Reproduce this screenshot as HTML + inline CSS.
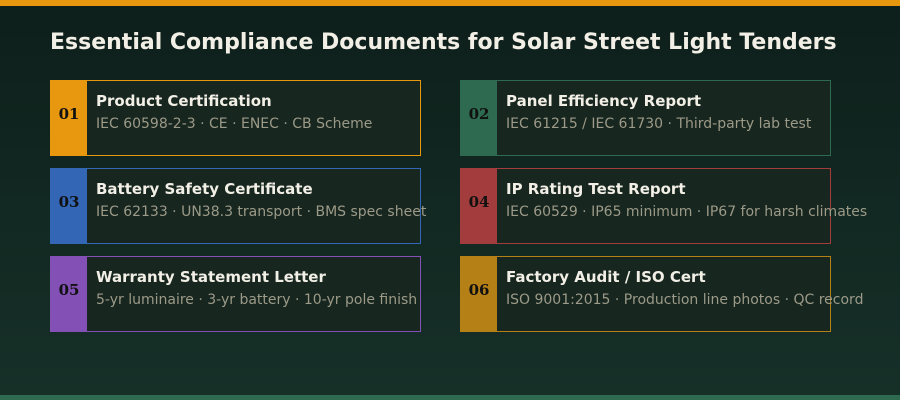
<!DOCTYPE html>
<html><head><style>html,body{margin:0;padding:0;background:#11221d}svg{display:block}</style></head>
<body>
<svg width="900" height="400" xmlns="http://www.w3.org/2000/svg" font-family="DejaVu Sans, sans-serif">
<defs><linearGradient id="g" x1="0" y1="0" x2="0" y2="1"><stop offset="0" stop-color="#0e1f1b"/><stop offset="1" stop-color="#163028"/></linearGradient></defs>
<rect width="900" height="400" fill="url(#g)"/>
<rect width="900" height="6" fill="#e8980e"/>
<rect y="395" width="900" height="5" fill="#2e6a50"/>
<text x="50" y="49" fill="#f2efe6" font-size="22" font-weight="bold">Essential Compliance Documents for Solar Street Light Tenders</text>
<g font-size="15">
<g transform="translate(50,80)">
<rect x="0.5" y="0.5" width="370" height="75" fill="#17261f" stroke="#e8980e"/><rect width="37" height="76" fill="#e8980e"/>
<text x="19" y="39" text-anchor="middle" font-family="DejaVu Serif, serif" font-weight="bold" font-size="15" fill="#111">01</text>
<text x="46" y="26" font-weight="bold" fill="#f2efe6">Product Certification</text>
<text x="46" y="48" font-size="14" fill="#9c9a88">IEC 60598-2-3 · CE · ENEC · CB Scheme</text></g>
<g transform="translate(460,80)">
<rect x="0.5" y="0.5" width="370" height="75" fill="#17261f" stroke="#2e6a50"/><rect width="37" height="76" fill="#2e6a50"/>
<text x="19" y="39" text-anchor="middle" font-family="DejaVu Serif, serif" font-weight="bold" font-size="15" fill="#111">02</text>
<text x="46" y="26" font-weight="bold" fill="#f2efe6">Panel Efficiency Report</text>
<text x="46" y="48" font-size="14" fill="#9c9a88">IEC 61215 / IEC 61730 · Third-party lab test</text></g>
<g transform="translate(50,168)">
<rect x="0.5" y="0.5" width="370" height="75" fill="#17261f" stroke="#3366b5"/><rect width="37" height="76" fill="#3366b5"/>
<text x="19" y="39" text-anchor="middle" font-family="DejaVu Serif, serif" font-weight="bold" font-size="15" fill="#111">03</text>
<text x="46" y="26" font-weight="bold" fill="#f2efe6">Battery Safety Certificate</text>
<text x="46" y="48" font-size="14" fill="#9c9a88">IEC 62133 · UN38.3 transport · BMS spec sheet</text></g>
<g transform="translate(460,168)">
<rect x="0.5" y="0.5" width="370" height="75" fill="#17261f" stroke="#a33d3d"/><rect width="37" height="76" fill="#a33d3d"/>
<text x="19" y="39" text-anchor="middle" font-family="DejaVu Serif, serif" font-weight="bold" font-size="15" fill="#111">04</text>
<text x="46" y="26" font-weight="bold" fill="#f2efe6">IP Rating Test Report</text>
<text x="46" y="48" font-size="14" fill="#9c9a88">IEC 60529 · IP65 minimum · IP67 for harsh climates</text></g>
<g transform="translate(50,256)">
<rect x="0.5" y="0.5" width="370" height="75" fill="#17261f" stroke="#8350b5"/><rect width="37" height="76" fill="#8350b5"/>
<text x="19" y="39" text-anchor="middle" font-family="DejaVu Serif, serif" font-weight="bold" font-size="15" fill="#111">05</text>
<text x="46" y="26" font-weight="bold" fill="#f2efe6">Warranty Statement Letter</text>
<text x="46" y="48" font-size="14" fill="#9c9a88">5-yr luminaire · 3-yr battery · 10-yr pole finish</text></g>
<g transform="translate(460,256)">
<rect x="0.5" y="0.5" width="370" height="75" fill="#17261f" stroke="#b58016"/><rect width="37" height="76" fill="#b58016"/>
<text x="19" y="39" text-anchor="middle" font-family="DejaVu Serif, serif" font-weight="bold" font-size="15" fill="#111">06</text>
<text x="46" y="26" font-weight="bold" fill="#f2efe6">Factory Audit / ISO Cert</text>
<text x="46" y="48" font-size="14" fill="#9c9a88">ISO 9001:2015 · Production line photos · QC record</text></g>
</g>
</svg>
</body></html>
